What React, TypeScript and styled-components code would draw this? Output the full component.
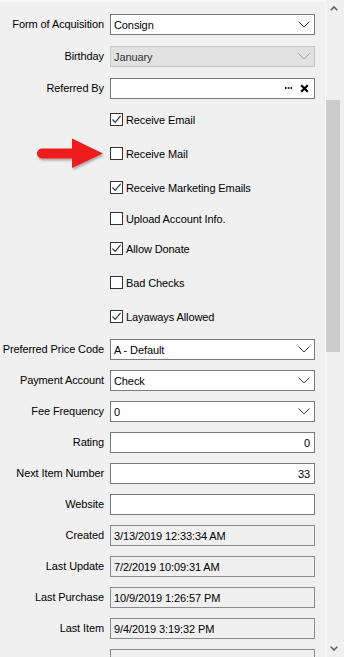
import styled, { createGlobalStyle } from "styled-components";

const GlobalStyle = createGlobalStyle`
  html, body {
    margin: 0;
    padding: 0;
    background: #f0f0f0;
    overflow: hidden;
  }
  body {
    font-family: "Liberation Sans", Arial, sans-serif;
    font-size: 11px;
    letter-spacing: -0.1px;
    color: #000;
  }
`;

const Window = styled.div`
  display: flex;
  width: 344px;
  height: 657px;
  overflow: hidden;
  background: #f0f0f0;
`;

const Content = styled.div`
  flex: 1;
  border-top: 2px solid #f9f9f9;
  display: flex;
  flex-direction: column;
`;

const Row = styled.div<{ $mt: number }>`
  display: grid;
  grid-template-columns: 104px 205px;
  column-gap: 6px;
  align-items: center;
  margin-top: ${(p) => p.$mt}px;
  flex-shrink: 0;
`;

const Label = styled.div`
  text-align: right;
  white-space: nowrap;
  line-height: 21px;
  height: 21px;
`;

const ArrowCell = styled.div`
  display: flex;
  justify-content: flex-end;
  height: 13px;
  align-items: center;
  overflow: visible;
  margin-right: -1px;
`;

const Box = styled.div<{ $tone?: "normal" | "disabled" | "readonly"; $right?: boolean }>`
  box-sizing: border-box;
  height: 21px;
  display: flex;
  align-items: center;
  padding: 0 4px 0 3px;
  border: 1px solid
    ${(p) => (p.$tone === "disabled" ? "#c6c6c6" : p.$tone === "readonly" ? "#8a8a8a" : "#7a7a7a")};
  background: ${(p) => (p.$tone === "disabled" ? "#e2e2e2" : p.$tone === "readonly" ? "#f0f0f0" : "#fff")};
  color: ${(p) => (p.$tone === "disabled" ? "#333" : "#000")};
  justify-content: ${(p) => (p.$right ? "flex-end" : "space-between")};
  white-space: nowrap;
`;

const Icons = styled.div`
  display: flex;
  align-items: center;
  gap: 8px;
  margin-left: auto;
  margin-right: 1px;
`;

const Check = styled.label`
  display: flex;
  align-items: center;
  gap: 3px;
  height: 13px;
  white-space: nowrap;
`;

const CheckBox = styled.span`
  box-sizing: border-box;
  width: 13px;
  height: 13px;
  border: 1px solid #333;
  background: #fff;
  display: flex;
  align-items: center;
  justify-content: center;
`;

const ScrollBar = styled.div`
  width: 18px;
  border-left: 1px solid #f7f7f7;
  display: flex;
  flex-direction: column;
  background: #f0f0f0;
`;

const ScrollButton = styled.div`
  height: 17px;
  display: flex;
  align-items: center;
  justify-content: center;
  padding-right: 2px;
`;

const Track = styled.div`
  flex: 1;
  display: flex;
  flex-direction: column;
`;

const Thumb = styled.div<{ $top: number; $size: number }>`
  margin-top: ${(p) => p.$top}px;
  height: ${(p) => p.$size}px;
  width: 14px;
  background: #cdcdcd;
`;

const Chevron = ({ light }: { light?: boolean }) => (
  <svg width="12" height="7" viewBox="0 0 12 7">
    <path d="M0.5 0.5 L6 6 L11.5 0.5" fill="none" stroke={light ? "#9a9a9a" : "#3c3c3c"} strokeWidth="1" />
  </svg>
);

const ScrollArrow = ({ up }: { up?: boolean }) => (
  <svg width="8" height="5" viewBox="0 0 8 5">
    <path
      d={up ? "M0.7 4.3 L4 1 L7.3 4.3" : "M0.7 0.7 L4 4 L7.3 0.7"}
      fill="none"
      stroke="#606060"
      strokeWidth="1.6"
    />
  </svg>
);

const Tick = () => (
  <svg width="11" height="11" viewBox="0 0 11 11">
    <path d="M1.5 5.5 L4.2 8.3 L9.6 1.8" fill="none" stroke="#333" strokeWidth="1.2" />
  </svg>
);

const RedArrow = () => (
  <svg width="68" height="32" viewBox="0 0 68 32" style={{ overflow: "visible" }}>
    <defs>
      <filter id="sh" x="-10%" y="-20%" width="130%" height="160%">
        <feDropShadow dx="1" dy="2" stdDeviation="1.2" floodColor="#000" floodOpacity="0.3" />
      </filter>
    </defs>
    <g filter="url(#sh)">
      <path
        d="M5 10.5 L35 10.5 L35 0.5 L66 15.5 L35 30 L35 20.5 L5 20.5 A5 5 0 0 1 5 10.5 Z"
        fill="#ee1c1c"
      />
    </g>
  </svg>
);

type Field = {
  label: string;
  value?: string;
  kind?: "combo" | "text" | "refer";
  tone?: "normal" | "disabled" | "readonly";
  right?: boolean;
  mt: number;
};

const topFields: Field[] = [
  { label: "Form of Acquisition", value: "Consign", kind: "combo", mt: 12 },
  { label: "Birthday", value: "January", kind: "combo", tone: "disabled", mt: 11 },
  { label: "Referred By", value: "", kind: "refer", mt: 11 },
];

const checks = [
  { label: "Receive Email", on: true, mt: 14 },
  { label: "Receive Mail", on: false, mt: 21, arrow: true },
  { label: "Receive Marketing Emails", on: true, mt: 21 },
  { label: "Upload Account Info.", on: false, mt: 18 },
  { label: "Allow Donate", on: true, mt: 17 },
  { label: "Bad Checks", on: false, mt: 21 },
  { label: "Layaways Allowed", on: true, mt: 21 },
];

const bottomFields: Field[] = [
  { label: "Preferred Price Code", value: "A - Default", kind: "combo", mt: 16 },
  { label: "Payment Account", value: "Check", kind: "combo", mt: 10 },
  { label: "Fee Frequency", value: "0", kind: "combo", mt: 10 },
  { label: "Rating", value: "0", right: true, mt: 10 },
  { label: "Next Item Number", value: "33", right: true, mt: 10 },
  { label: "Website", value: "", mt: 10 },
  { label: "Created", value: "3/13/2019 12:33:34 AM", tone: "readonly", mt: 10 },
  { label: "Last Update", value: "7/2/2019 10:09:31 AM", tone: "readonly", mt: 10 },
  { label: "Last Purchase", value: "10/9/2019 1:26:57 PM", tone: "readonly", mt: 10 },
  { label: "Last Item", value: "9/4/2019 3:19:32 PM", tone: "readonly", mt: 10 },
  { label: "", value: "", tone: "readonly", mt: 10 },
];

const FieldRow = ({ f }: { f: Field }) => (
  <Row $mt={f.mt}>
    <Label>{f.label}</Label>
    <Box $tone={f.tone} $right={f.right}>
      <span>{f.value}</span>
      {f.kind === "combo" && <Chevron light={f.tone === "disabled"} />}
      {f.kind === "refer" && (
        <Icons>
          <svg width="7" height="3" viewBox="0 0 7 3">
            <rect x="0" y="0" width="1.6" height="2" fill="#222" />
            <rect x="2.7" y="0" width="1.6" height="2" fill="#222" />
            <rect x="5.4" y="0" width="1.6" height="2" fill="#222" />
          </svg>
          <svg width="9" height="9" viewBox="0 0 9 9">
            <path d="M1.2 1.2 L7.8 7.8 M7.8 1.2 L1.2 7.8" stroke="#000" strokeWidth="2.2" />
          </svg>
        </Icons>
      )}
    </Box>
  </Row>
);

export default function App() {
  return (
    <Window>
      <GlobalStyle />
      <Content>
        {topFields.map((f) => (
          <FieldRow key={f.label} f={f} />
        ))}
        {checks.map((c) => (
          <Row key={c.label} $mt={c.mt}>
            {c.arrow ? (
              <ArrowCell>
                <RedArrow />
              </ArrowCell>
            ) : (
              <span />
            )}
            <Check>
              <CheckBox>{c.on && <Tick />}</CheckBox>
              {c.label}
            </Check>
          </Row>
        ))}
        {bottomFields.map((f, i) => (
          <FieldRow key={f.label + i} f={f} />
        ))}
      </Content>
      <ScrollBar>
        <ScrollButton>
          <ScrollArrow up />
        </ScrollButton>
        <Track>
          <Thumb $top={83} $size={252} />
        </Track>
        <ScrollButton>
          <ScrollArrow />
        </ScrollButton>
      </ScrollBar>
    </Window>
  );
}
